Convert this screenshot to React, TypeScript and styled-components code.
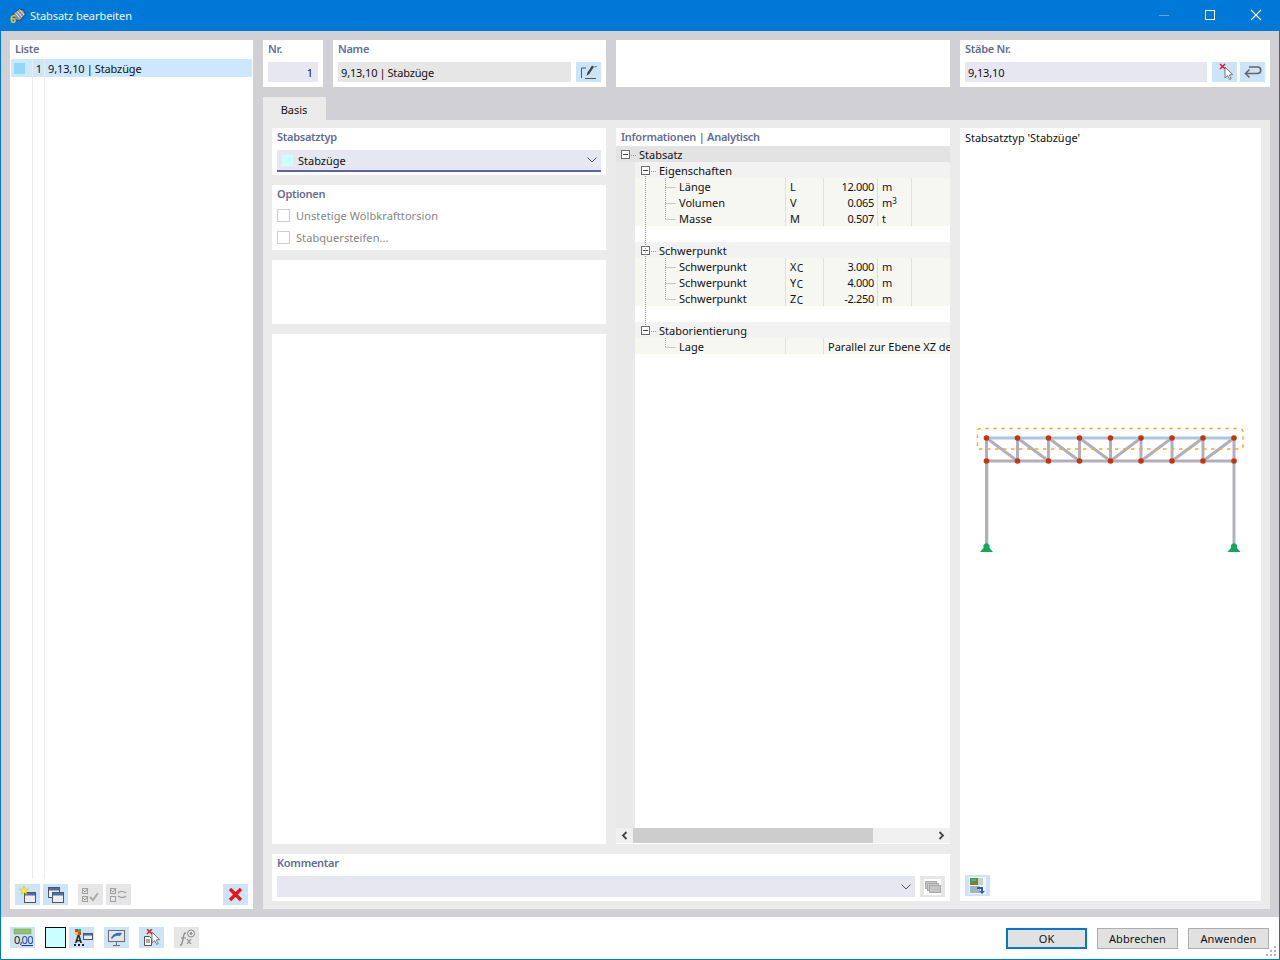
import React from "react";
import styled, { createGlobalStyle } from "styled-components";

const GlobalStyle = createGlobalStyle`
  html, body { margin: 0; padding: 0; background: #fff; }
  body { font-family: "Noto Sans", "Open Sans", "Liberation Sans", sans-serif; font-size: 11px; color: #111; }
  * { box-sizing: border-box; }
`;

const Win = styled.div`
  position: relative; width: 1280px; height: 960px; border: 1px solid #0078d7; display: flex; flex-direction: column; background: #fff; overflow: hidden;
`;
const TitleBar = styled.div`
  height: 30px; background: #0078d7; color: #fff; display: flex; align-items: center; padding-left: 8px; flex: none;
`;
const TitleText = styled.span`
  margin-left: 4px; font-size: 11px; letter-spacing: -0.05px; color: #f2f8fd; flex: 1; position: relative; top: -1px;
`;
const WinControl = styled.div`
  width: 46px; height: 30px; display: flex; align-items: center; justify-content: center; position: relative; top: -1px;
`;
const Body = styled.div`
  flex: 1; display: flex; gap: 10px; background: #d1d0d4; padding: 9px 9px 8px;
`;
const ListPanel = styled.div`
  width: 243px; background: #fff; display: flex; flex-direction: column; position: relative;
`;
const Label = styled.div`
  height: 18px; line-height: 18px; font-weight: 600; font-size: 11px; color: #666c94; padding-left: 5px; letter-spacing: -0.27px;
`;
const ListBody = styled.div`
  flex: 1; position: relative; margin: 1px 1px 0;
`;
const ListGuide = styled.div<{ $left: number }>`
  position: absolute; top: 0; bottom: 0; left: ${(p) => p.$left}px; width: 1px; background: #ebebeb;
`;
const ListRow = styled.div`
  position: relative; height: 18px; background: #cce8ff; display: flex; align-items: center; letter-spacing: -0.12px; word-spacing: -0.6px;
`;
const ListSwatch = styled.span`
  width: 11px; height: 11px; background: #93d8f8; margin-left: 3px;
`;
const ListNum = styled.span`
  width: 17px; text-align: right; margin-right: 6px;
`;
const ListFoot = styled.div`
  height: 30px; display: flex; padding: 5px 5px 4px; gap: 3px; flex: none;
`;
const IconBtn = styled.div<{ $off?: boolean; $ml?: number; $tall?: boolean }>`
  width: 25px; height: ${(p) => (p.$tall ? 20 : 21)}px; flex: none; display: flex; align-items: center; justify-content: center;
  background: ${(p) => (p.$off ? "#e6e6e6" : "#cce4f7")};
  margin-left: ${(p) => p.$ml ?? 0}px;
`;
const Right = styled.div`
  flex: 1; display: flex; flex-direction: column; min-width: 0;
`;
const TopRow = styled.div`
  height: 47px; display: flex; gap: 10px; flex: none;
`;
const Card = styled.div<{ $w?: number; $h?: number }>`
  background: #fff;
  ${(p) => (p.$w ? `width: ${p.$w}px; flex: none;` : "")}
  ${(p) => (p.$h ? `height: ${p.$h}px; flex: none;` : "")}
`;
const FieldRow = styled.div`
  display: flex; margin: 4px 5px 0; gap: 5px;
`;
const Input = styled.div<{ $grey?: boolean; $right?: boolean }>`
  flex: 1; height: 20px; line-height: 21px; padding: 0 ${(p) => (p.$right ? 5 : 3)}px;
  background: ${(p) => (p.$grey ? "#e6e6e6" : "#e7e7f1")};
  text-align: ${(p) => (p.$right ? "right" : "left")};
  letter-spacing: -0.15px; word-spacing: -0.6px;
`;
const BtnPair = styled.div`
  display: flex; gap: 3px;
`;
const TabRow = styled.div`
  margin-top: 10px; height: 23px; flex: none;
`;
const Tab = styled.div`
  width: 63px; height: 23px; background: #ebebeb; display: flex; align-items: center; justify-content: center; padding: 2px 1px 0 0;
`;
const Content = styled.div`
  flex: 1; background: #ebebeb; padding: 8px 9px; display: flex; gap: 10px; min-height: 0;
`;
const MainCol = styled.div`
  width: 678px; display: flex; flex-direction: column; gap: 10px; flex: none;
`;
const Upper = styled.div`
  height: 716px; display: flex; gap: 10px; flex: none;
`;
const FormCol = styled.div`
  width: 334px; display: flex; flex-direction: column; gap: 10px; flex: none;
`;
const GrowCard = styled(Card)`
  flex: 1;
`;
const Combo = styled.div<{ $underline?: boolean; $h: number; $flush?: boolean }>`
  height: ${(p) => p.$h}px; margin: 4px 5px 0; background: #e7e7f1; display: flex; align-items: center; flex: 1;
  border-bottom: ${(p) => (p.$underline ? "2px solid #6262a8" : "none")};
`;
const ComboRow = styled.div`
  display: flex; padding-right: 5px;
`;
const ComboSwatch = styled.span`
  width: 11px; height: 11px; background: #ccffff; margin: 0 5px 0 5px;
`;
const ComboText = styled.span`
  flex: 1;
`;
const Chevron = styled.svg`
  margin-right: 4px;
`;
const CheckRow = styled.div`
  height: 22px; display: flex; align-items: center; padding: 2px 0 0 5px; color: #848484; letter-spacing: 0.08px;
`;
const CheckBox = styled.span`
  width: 13px; height: 13px; border: 1px solid #cfcfcf; margin-right: 6px; background: #fff;
`;
const InfoCard = styled(Card)`
  width: 334px; flex: none; display: flex; flex-direction: column;
`;
const Tree = styled.div`
  position: relative; flex: 1; min-height: 0; overflow: hidden; background: linear-gradient(to right, #e9e9e9 19px, #fff 19px);
`;
const TreeLines = styled.svg`
  position: absolute; left: 0; top: 0; pointer-events: none;
`;
const GroupRow = styled.div<{ $top?: boolean }>`
  height: 16px; display: flex; align-items: center; position: relative;
  margin-left: ${(p) => (p.$top ? 0 : 19)}px;
  padding-left: ${(p) => (p.$top ? 5 : 6)}px;
  background: ${(p) => (p.$top ? "#e3e3e3" : "#f2f2f2")};
`;
const Expander = styled.span`
  width: 9px; height: 9px; border: 1px solid #6e6e6e; background: #fff; margin-right: 9px; position: relative; flex: none;
  &::after { content: ""; position: absolute; left: 1px; right: 1px; top: 3px; height: 1px; background: #444; }
`;
const LeafRow = styled.div`
  height: 16px; margin-left: 19px; display: grid; grid-template-columns: 150px 38px 54px 34px 1fr; background: #f7f7f2;
`;
const Cell = styled.div<{ $line?: boolean; $num?: boolean; $pl?: number; $pr?: number; $span?: number }>`
  height: 16px; line-height: 18px; white-space: nowrap; overflow: hidden;
  border-left: ${(p) => (p.$line ? "1px solid #e0e0dc" : "none")};
  text-align: ${(p) => (p.$num ? "right" : "left")};
  letter-spacing: ${(p) => (p.$num ? "-0.3px" : "0")};
  padding-left: ${(p) => p.$pl ?? 0}px;
  padding-right: ${(p) => p.$pr ?? 0}px;
  ${(p) => (p.$span ? `grid-column: span ${p.$span};` : "")}
`;
const Spacer = styled.div`
  height: 16px; margin-left: 19px;
`;
const Sub = styled.span`
  font-size: 10px; position: relative; top: 1px; margin-left: 0.5px;
`;
const Sup = styled.sup`
  font-size: 8px; line-height: 0; vertical-align: 3px;
`;
const ScrollBar = styled.div`
  height: 15px; margin: 0 0 1px; background: #f0f0f0; display: flex; align-items: center; flex: none;
`;
const ScrollArrow = styled.div`
  width: 17px; height: 15px; display: flex; align-items: center; justify-content: center; flex: none;
`;
const ScrollThumb = styled.div`
  width: 240px; height: 15px; background: #cdcdcd; flex: none;
`;
const ScrollGap = styled.div`
  flex: 1;
`;
const PreviewCol = styled(Card)`
  width: 301px; flex: none; display: flex; flex-direction: column;
`;
const PreviewTitle = styled.div`
  height: 20px; line-height: 20px; padding-left: 5px; letter-spacing: -0.02px;
`;
const Canvas = styled.div`
  flex: 1; padding-top: 276px; padding-left: 13px;
`;
const PreviewFoot = styled.div`
  height: 26px; padding-left: 5px; flex: none;
`;
const Footer = styled.div`
  height: 42px; flex: none; display: flex; padding: 10px 10px 0 9px; background: #fff;
`;
const FootGroup = styled.div<{ $gap: number }>`
  display: flex; gap: ${(p) => p.$gap}px;
`;
const ColorBox = styled.div`
  width: 21px; height: 21px; background: #ccffff; border: 1px solid #111; flex: none;
`;
const FootSpacer = styled.div`
  flex: 1;
`;
const DialogBtn = styled.div<{ $primary?: boolean }>`
  width: 81px; height: 21px; margin-top: 1px; background: #e1e1e1; display: flex; align-items: center; justify-content: center;
  border: ${(p) => (p.$primary ? "2px solid #0078d7" : "1px solid #adadad")};
  letter-spacing: 0.1px;
`;
const Grip = styled.svg`
  position: absolute; right: 1px; bottom: 1px;
`;
const FootTop = styled.div`
  margin-top: 4px; flex: none;
`;

const Windowlet = ({ x, y }: { x: number; y: number }) => (
  <g>
    <rect x={x} y={y} width="11" height="10" fill="#eee" stroke="#555" />
    <rect x={x + 0.5} y={y + 0.5} width="10" height="2.5" fill="#4a6cc0" />
  </g>
);

const CursorX = ({ dx = 0 }: { dx?: number }) => (
  <g transform={`translate(${dx} 0)`}>
    <path d="M7 4l0 11 2.6-2.4 2 3.8 1.6-.8-1.9-3.6 3.4-.4z" fill="#fff" stroke="#777" strokeWidth="1" />
    <path d="M2 1l5 5M7 1L2 6" stroke="#e8101c" strokeWidth="1.4" />
  </g>
);

const nodesX = [986.5, 1017.5, 1048.5, 1079.5, 1110.5, 1141, 1172, 1203, 1234];

const Truss = () => {
  const ox = 973;
  const oy = 424;
  const X = (v: number) => v - ox;
  const Y = (v: number) => v - oy;
  return (
    <svg width="280" height="132" viewBox="0 0 280 132">
      {nodesX.slice(0, -1).map((x, i) => (
        <line key={`d${i}`} x1={X(i < 4 ? x : nodesX[i + 1])} y1={Y(438)} x2={X(i < 4 ? nodesX[i + 1] : x)} y2={Y(461)} stroke="#b0b0bc" strokeWidth="3" />
      ))}
      {nodesX.map((x) => (
        <line key={`v${x}`} x1={X(x)} y1={Y(438)} x2={X(x)} y2={Y(461)} stroke="#b0b0bc" strokeWidth="3" />
      ))}
      <line x1={X(986.5)} y1={Y(461)} x2={X(1234)} y2={Y(461)} stroke="#b0b0bc" strokeWidth="3" />
      <line x1={X(986.5)} y1={Y(438)} x2={X(1234)} y2={Y(438)} stroke="#aac6e2" strokeWidth="3" />
      <line x1={X(986.5)} y1={Y(461)} x2={X(986.5)} y2={Y(546)} stroke="#b0b0bc" strokeWidth="3" />
      <line x1={X(1234)} y1={Y(461)} x2={X(1234)} y2={Y(546)} stroke="#b0b0bc" strokeWidth="3" />
      <line x1={X(988.5)} y1={Y(463)} x2={X(988.5)} y2={Y(544)} stroke="#e4e6f0" strokeWidth="1" />
      <path
        d={`M${X(979)} ${Y(449)}H${X(1241)}L${X(1243)} ${Y(447)}V${Y(432)}Q${X(1243)} ${Y(428.5)} ${X(1239)} ${Y(428.5)}H${X(981)}Q${X(977.5)} ${Y(428.5)} ${X(977.5)} ${Y(431)}V${Y(447)}L${X(979)} ${Y(449)}`}
        fill="none" stroke="#f9a825" strokeWidth="1.500" strokeDasharray="3.500 4.500"
      />
      {[986.5, 1234].map((x) => (
        <path key={`s${x}`} d={`M${X(x - 6.5)} ${Y(552)}L${X(x - 3)} ${Y(548)}V${Y(545)}Q${X(x)} ${Y(541.5)} ${X(x + 3)} ${Y(545)}V${Y(548)}L${X(x + 6.5)} ${Y(552)}Z`} fill="#12a858" />
      ))}
      {nodesX.flatMap((x) => [438, 461].map((y) => <circle key={`${x}-${y}`} cx={X(x)} cy={Y(y)} r="2.800" fill="#c8340a" />))}
    </svg>
  );
};

const Leaf = ({ name, sym, val, unit }: { name: string; sym: React.ReactNode; val: string; unit: string }) => (
  <LeafRow>
    <Cell $pl={44}>{name}</Cell>
    <Cell $line $pl={4}>{sym}</Cell>
    <Cell $line $num $pr={3}>{val}</Cell>
    <Cell $line $pl={4}>{unit === "m3" ? <>m<Sup>3</Sup></> : unit}</Cell>
    <Cell $line />
  </LeafRow>
);

export default function App() {
  return (
    <>
      <GlobalStyle />
      <Win>
        <TitleBar>
          <svg width="17" height="17" viewBox="0 0 17 17">
            <path d="M4 6.500L10 1l4.500 1 2 4.500-6 6.500-4.500-1.500z" fill="#8b8f98" stroke="#33363c" strokeWidth=".8" />
            <path d="M6 4.500l5 6M8 3l5 6M10.500 1.500l4.500 5.500" stroke="#eceef0" strokeWidth="1" />
            <text x="1" y="15" fontSize="10" fontWeight="700" fontFamily="Noto Sans" fill="#f6c33a">6</text>
          </svg>
          <TitleText>Stabsatz bearbeiten</TitleText>
          <WinControl>
            <svg width="12" height="12"><line x1="1" y1="6.500" x2="11" y2="6.500" stroke="#5aa6e4" /></svg>
          </WinControl>
          <WinControl>
            <svg width="12" height="12"><rect x="1.500" y="1.500" width="9" height="9" fill="none" stroke="#fff" /></svg>
          </WinControl>
          <WinControl>
            <svg width="12" height="12"><path d="M1 1l10 10M11 1L1 11" stroke="#fff" strokeWidth="1.100" /></svg>
          </WinControl>
        </TitleBar>
        <Body>
          <ListPanel>
            <Label>Liste</Label>
            <ListBody>
              <ListRow>
                <ListSwatch />
                <ListNum>1</ListNum>
                9,13,10 | Stabzüge
              </ListRow>
              <ListGuide $left={21} />
              <ListGuide $left={33} />
            </ListBody>
            <ListFoot>
              <IconBtn>
                <svg width="19" height="18" viewBox="0 0 19 18">
                  <Windowlet x={6.5} y={6.5} />
                  <path d="M6 0l1.200 3.200L10.500 3 8 5.200l1 3.200L6 6.600 3 8.400l1-3.200L1.500 3l3.300.2z" fill="#ffee33" stroke="#d8b800" strokeWidth=".5" />
                </svg>
              </IconBtn>
              <IconBtn>
                <svg width="19" height="18" viewBox="0 0 19 18">
                  <Windowlet x={2.5} y={1.5} />
                  <Windowlet x={6.5} y={6.5} />
                </svg>
              </IconBtn>
              <IconBtn $off $ml={7}>
                <svg width="19" height="18" viewBox="0 0 19 18" fill="none" stroke="#a0a0a0">
                  <rect x="1.500" y="2.500" width="5" height="5" /><rect x="1.500" y="10.500" width="5" height="5" />
                  <path d="M2 4l2 2 3-4M2 12l2 2 3-4" />
                  <path d="M9 11l3 3 5-7" strokeWidth="2" stroke="#aaa" />
                </svg>
              </IconBtn>
              <IconBtn $off>
                <svg width="19" height="18" viewBox="0 0 19 18" fill="none" stroke="#a0a0a0">
                  <rect x="1.500" y="2.500" width="5" height="5" /><rect x="1.500" y="10.500" width="5" height="5" />
                  <path d="M2 4l2 2 3-4" />
                  <path d="M9 7c2-2 5-2 8 0M17 10c-2 2-5 2-8 0" strokeWidth="1.400" />
                </svg>
              </IconBtn>
              <IconBtn $ml={89}>
                <svg width="17" height="17" viewBox="0 0 17 17"><path d="M3 3l11 11M14 3L3 14" stroke="#f00f14" strokeWidth="3.200" /></svg>
              </IconBtn>
            </ListFoot>
          </ListPanel>
          <Right>
            <TopRow>
              <Card $w={60}>
                <Label>Nr.</Label>
                <FieldRow><Input $right>1</Input></FieldRow>
              </Card>
              <Card $w={273}>
                <Label>Name</Label>
                <FieldRow>
                  <Input $grey>9,13,10 | Stabzüge</Input>
                  <IconBtn $tall>
                    <svg width="17" height="16" viewBox="0 0 17 16" fill="none">
                      <path d="M6 4H1.500v10M5 14.500h11" stroke="#555" />
                      <path d="M6.500 12l1-3.500L12 1.500l2 1.200-4.500 7z" fill="#444" />
                      <path d="M14.500 3l2-.5" stroke="#555" />
                    </svg>
                  </IconBtn>
                </FieldRow>
              </Card>
              <Card $w={334} />
              <Card $w={310}>
                <Label>Stäbe Nr.</Label>
                <FieldRow>
                  <Input>9,13,10</Input>
                  <BtnPair>
                    <IconBtn $tall><svg width="18" height="18" viewBox="0 0 18 18"><CursorX dx={2} /></svg></IconBtn>
                    <IconBtn $tall>
                      <svg width="19" height="14" viewBox="0 0 19 14" fill="none">
                        <path d="M6 2h8.500a2.800 2.800 0 0 1 0 6.500H3" stroke="#666" strokeWidth="1.600" />
                        <path d="M6.500 4.500L2.500 8.500l4 4" stroke="#666" strokeWidth="1.600" />
                      </svg>
                    </IconBtn>
                  </BtnPair>
                </FieldRow>
              </Card>
            </TopRow>
            <TabRow><Tab>Basis</Tab></TabRow>
            <Content>
              <MainCol>
                <Upper>
                  <FormCol>
                    <Card $h={47}>
                      <Label>Stabsatztyp</Label>
                      <Combo $underline $h={22}>
                        <ComboSwatch />
                        <ComboText>Stabzüge</ComboText>
                        <Chevron width="10" height="6" viewBox="0 0 10 6" fill="none"><path d="M.5.5L5 5 9.500.5" stroke="#555" /></Chevron>
                      </Combo>
                    </Card>
                    <Card $h={65}>
                      <Label>Optionen</Label>
                      <CheckRow><CheckBox />Unstetige Wölbkrafttorsion</CheckRow>
                      <CheckRow><CheckBox />Stabquersteifen...</CheckRow>
                    </Card>
                    <Card $h={64} />
                    <GrowCard />
                  </FormCol>
                  <InfoCard>
                    <Label>Informationen | Analytisch</Label>
                    <Tree>
                      <GroupRow $top><Expander />Stabsatz</GroupRow>
                      <GroupRow><Expander />Eigenschaften</GroupRow>
                      <Leaf name="Länge" sym="L" val="12.000" unit="m" />
                      <Leaf name="Volumen" sym="V" val="0.065" unit="m3" />
                      <Leaf name="Masse" sym="M" val="0.507" unit="t" />
                      <Spacer />
                      <GroupRow><Expander />Schwerpunkt</GroupRow>
                      <Leaf name="Schwerpunkt" sym={<>X<Sub>C</Sub></>} val="3.000" unit="m" />
                      <Leaf name="Schwerpunkt" sym={<>Y<Sub>C</Sub></>} val="4.000" unit="m" />
                      <Leaf name="Schwerpunkt" sym={<>Z<Sub>C</Sub></>} val="-2.250" unit="m" />
                      <Spacer />
                      <GroupRow><Expander />Staborientierung</GroupRow>
                      <LeafRow>
                        <Cell $pl={44}>Lage</Cell>
                        <Cell $line />
                        <Cell $line $span={3} $pl={4}>Parallel zur Ebene XZ des Koordinatensystems</Cell>
                      </LeafRow>
                      <TreeLines width="80" height="220" fill="none" stroke="#9a9a9a" strokeDasharray="1 1">
                        <path d="M29.500 30V180" />
                        <path d="M49.500 32V73M49.500 112V153M49.500 192V201" />
                        <path d="M15 9.500H21M35 25.500H41M35 105.500H41M35 185.500H41" />
                        <path d="M49.500 41.500H60M49.500 57.500H60M49.500 73.500H60M49.500 121.500H60M49.500 137.500H60M49.500 153.500H60M49.500 201.500H60" />
                      </TreeLines>
                    </Tree>
                    <ScrollBar>
                      <ScrollArrow>
                        <svg width="7" height="9" viewBox="0 0 7 9" fill="none"><path d="M5.500 1L2 4.500 5.500 8" stroke="#444" strokeWidth="1.800" /></svg>
                      </ScrollArrow>
                      <ScrollThumb />
                      <ScrollGap />
                      <ScrollArrow>
                        <svg width="7" height="9" viewBox="0 0 7 9" fill="none"><path d="M1.500 1L5 4.500 1.500 8" stroke="#444" strokeWidth="1.800" /></svg>
                      </ScrollArrow>
                    </ScrollBar>
                  </InfoCard>
                </Upper>
                <Card $h={47}>
                  <Label>Kommentar</Label>
                  <ComboRow>
                    <Combo $h={21}>
                      <ComboText />
                      <Chevron width="10" height="6" viewBox="0 0 10 6" fill="none"><path d="M.5.5L5 5 9.500.5" stroke="#555" /></Chevron>
                    </Combo>
                    <FootTop>
                      <IconBtn $off>
                        <svg width="17" height="16" viewBox="0 0 17 16">
                          <rect x="0" y="0" width="17" height="16" fill="#fff" />
                          <rect x="1.500" y="2.500" width="11" height="7" fill="#c8c8c8" stroke="#aaa" />
                          <rect x="3.500" y="4.500" width="11" height="7" fill="#c8c8c8" stroke="#aaa" />
                          <rect x="5.500" y="6.500" width="11" height="7" fill="#c4c4c4" stroke="#aaa" />
                        </svg>
                      </IconBtn>
                    </FootTop>
                  </ComboRow>
                </Card>
              </MainCol>
              <PreviewCol>
                <PreviewTitle>Stabsatztyp 'Stabzüge'</PreviewTitle>
                <Canvas><Truss /></Canvas>
                <PreviewFoot>
                  <IconBtn>
                    <svg width="17" height="17" viewBox="0 0 17 17">
                      <rect x="0" y="0" width="17" height="17" fill="#f2f4f7" />
                      <rect x="1" y="1" width="8" height="7" fill="#5c8f3c" />
                      <rect x="2" y="2" width="5" height="2" fill="#39b6b0" />
                      <rect x="2" y="5" width="4" height="2" fill="#a0742c" />
                      <rect x="9" y="1" width="5" height="7" fill="#c6d4c0" />
                      <rect x="1" y="9" width="10" height="7" fill="#a4b2c8" />
                      <path d="M8 10h6v4l2 0-3 3-3-3h2v-2H8z" fill="#2f5fa8" />
                    </svg>
                  </IconBtn>
                </PreviewFoot>
              </PreviewCol>
            </Content>
          </Right>
        </Body>
        <Footer>
          <FootGroup $gap={10}>
            <IconBtn>
              <svg width="21" height="19" viewBox="0 0 21 19">
                <rect x="2" y="1" width="17" height="5" fill="#8fc46a" stroke="#6a9a4c" strokeWidth=".5" />
                <text x="2" y="16" fontSize="11" fontFamily="Noto Sans" fill="#222" letterSpacing="-.6">0,</text>
                <text x="9.500" y="16" fontSize="11" fontFamily="Noto Sans" fill="#1c3fa0" letterSpacing="-.6" textDecoration="underline">00</text>
              </svg>
            </IconBtn>
            <ColorBox />
          </FootGroup>
          <FootGroup $gap={10}>
            <IconBtn $ml={3}>
              <svg width="22" height="20" viewBox="0 0 22 20">
                <rect x="4" y="1" width="3" height="3" fill="#e8402c" /><rect x="7" y="1" width="3" height="3" fill="#3db04a" />
                <rect x="4" y="4" width="3" height="3" fill="#f2c522" /><rect x="7" y="4" width="3" height="3" fill="#e8402c" />
                <text x="4" y="15" fontSize="10" fontWeight="700" fontFamily="Noto Sans" fill="#222">A</text>
                <rect x="3" y="16" width="2" height="2" fill="#222" /><rect x="7" y="16" width="2" height="2" fill="#222" /><rect x="11" y="16" width="2" height="2" fill="#222" />
                <rect x="12.500" y="5.500" width="9" height="6" fill="#eee" stroke="#555" />
                <rect x="13" y="6" width="8" height="1.600" fill="#4a6cc0" />
              </svg>
            </IconBtn>
            <IconBtn>
              <svg width="19" height="18" viewBox="0 0 19 18" fill="none">
                <rect x="1.500" y="1.500" width="16" height="11" fill="#dfe6ee" stroke="#6c6c6c" />
                <path d="M4 9c2-5 7-6 11-5l-2 3c-3-1-6 0-8 3z" fill="#3f6fb0" />
                <path d="M9.500 13v3M6 16.500h7" stroke="#6c6c6c" />
              </svg>
            </IconBtn>
            <IconBtn>
              <svg width="18" height="18" viewBox="0 0 18 18">
                <path d="M1.500 7.500h5l2 2v7h-7z" fill="#fff" stroke="#555" />
                <path d="M3 11h4M3 13h4" stroke="#555" />
                <g transform="translate(2 -1)"><CursorX /></g>
              </svg>
            </IconBtn>
            <IconBtn $off>
              <svg width="20" height="18" viewBox="0 0 20 18" fill="none" stroke="#8d8d8d">
                <path d="M3 16c2 0 2-1 3-6s1-6 3-6" strokeWidth="1.300" />
                <path d="M4 9h5" />
                <path d="M10 10l4 5M14 10l-4 5" strokeWidth="1.200" />
                <circle cx="14" cy="4.500" r="3.500" />
                <circle cx="14" cy="4.500" r="1" fill="#8d8d8d" />
              </svg>
            </IconBtn>
          </FootGroup>
          <FootSpacer />
          <FootGroup $gap={10}>
            <DialogBtn $primary>OK</DialogBtn>
            <DialogBtn>Abbrechen</DialogBtn>
            <DialogBtn>Anwenden</DialogBtn>
          </FootGroup>
        </Footer>
        <Grip width="12" height="12" viewBox="0 0 12 12" fill="#b4b4b4">
          <rect x="8" y="0" width="2" height="2" />
          <rect x="4" y="4" width="2" height="2" /><rect x="8" y="4" width="2" height="2" />
          <rect x="0" y="8" width="2" height="2" /><rect x="4" y="8" width="2" height="2" /><rect x="8" y="8" width="2" height="2" />
        </Grip>
      </Win>
    </>
  );
}
